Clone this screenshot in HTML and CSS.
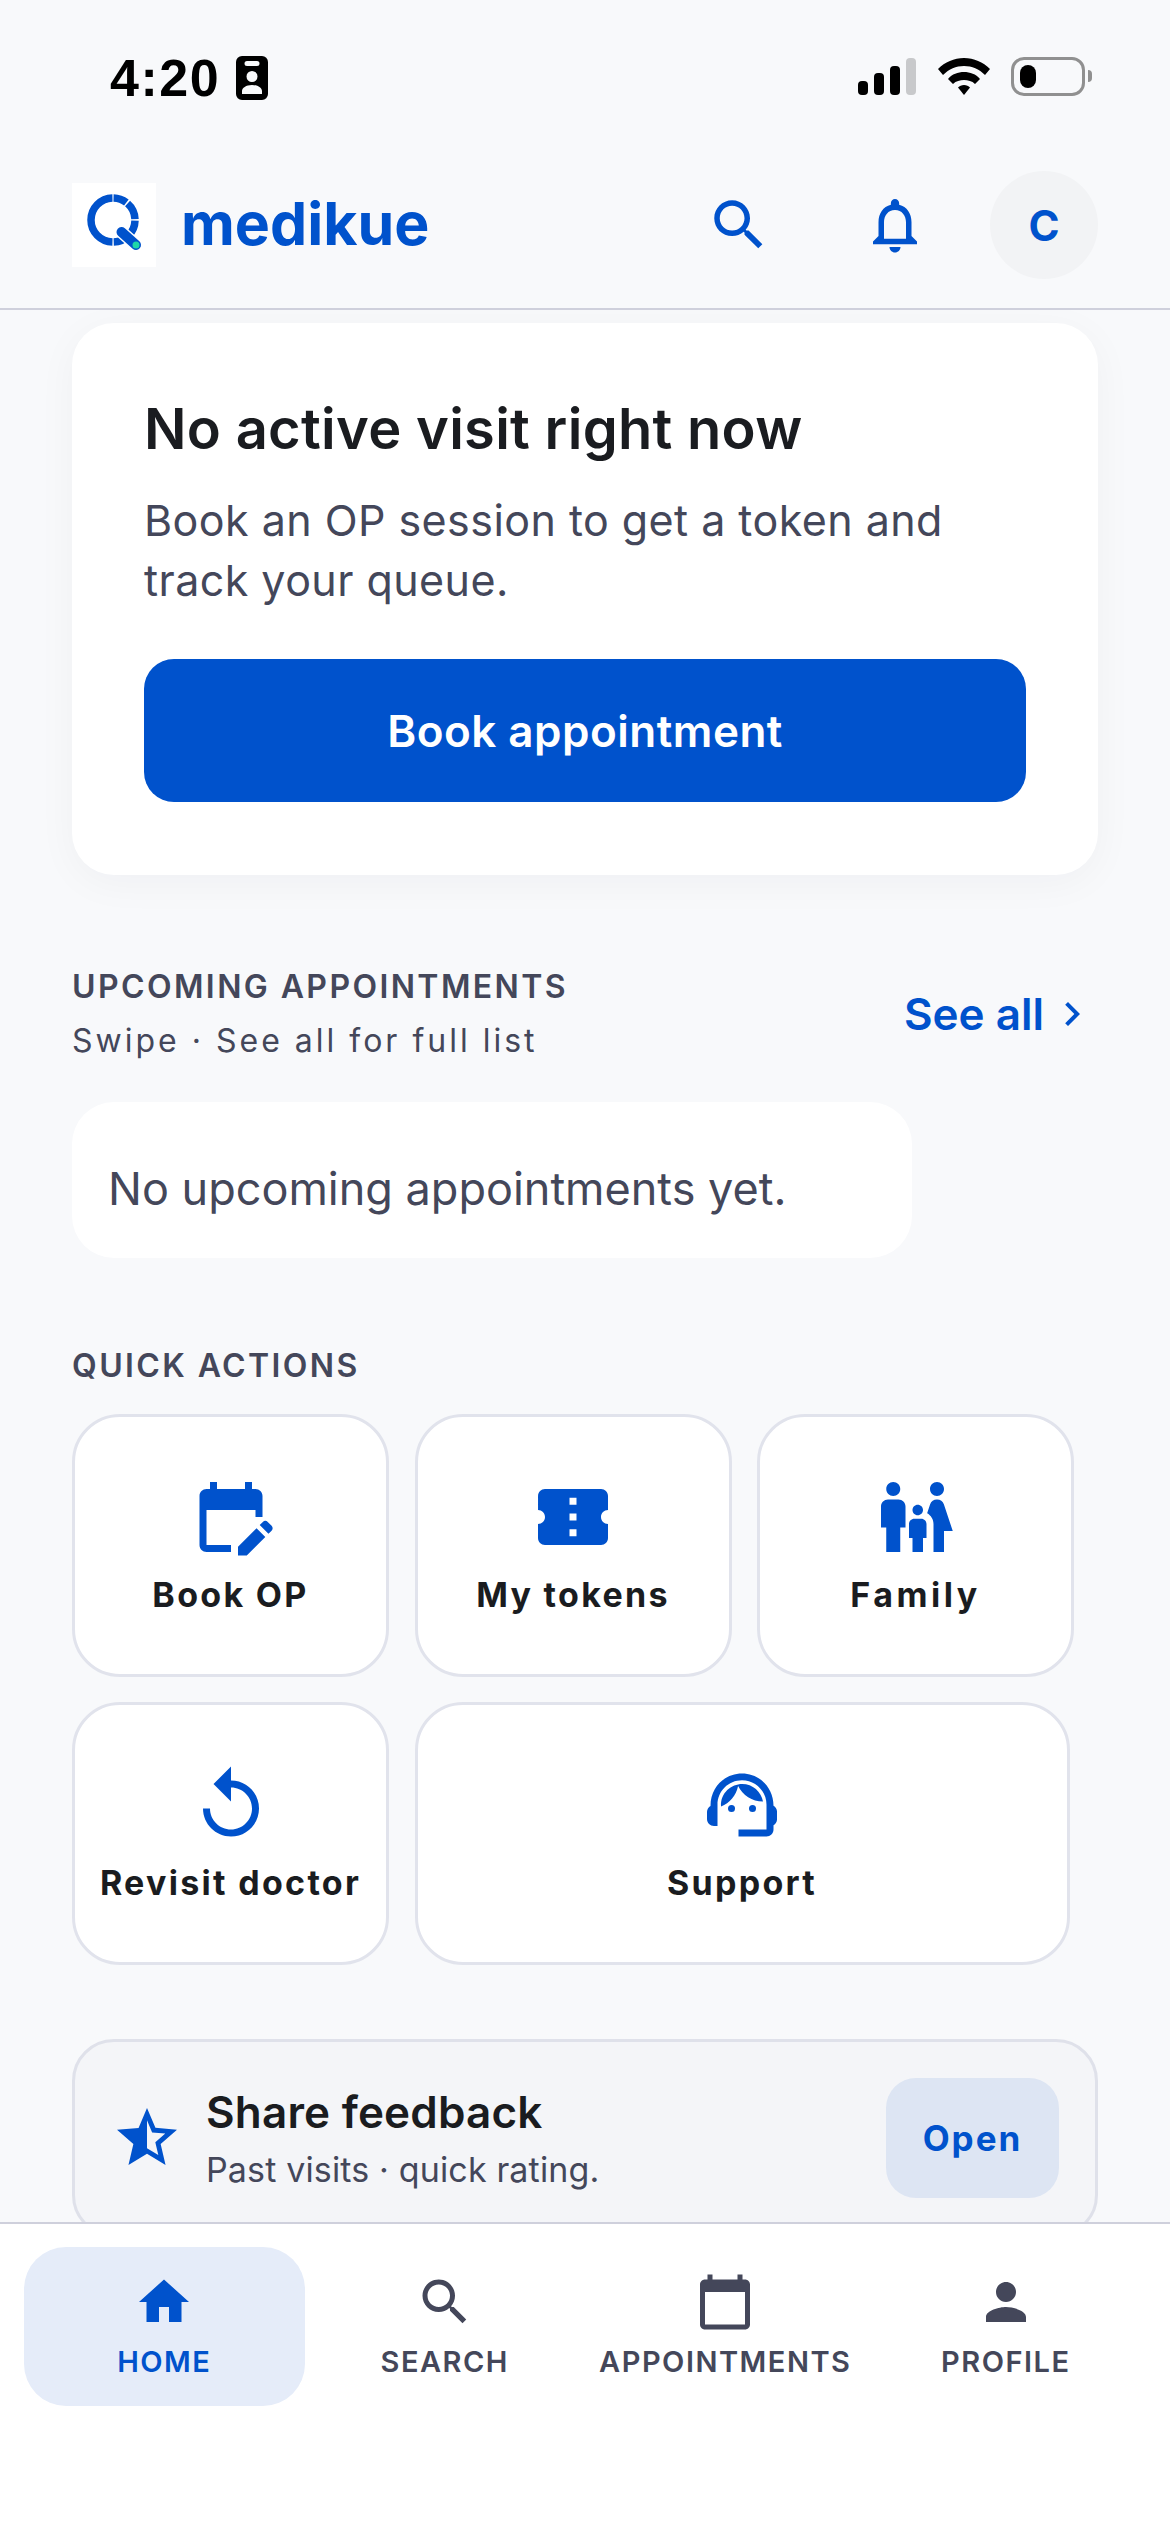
FILE: index.html
```html
<!DOCTYPE html>
<html lang="en">
<head>
<meta charset="utf-8">
<title>medikue</title>
<link rel="stylesheet" href="styles.css">
</head>
<body>
<div class="page">
  <div class="statusbar">
    <div class="status-left">
      <span class="time">4:20</span>
      <svg class="badge" viewBox="0 0 32 44"><path fill="#000" fill-rule="evenodd" d="M6 0h20a6 6 0 0 1 6 6v32a6 6 0 0 1-6 6H6a6 6 0 0 1-6-6V6a6 6 0 0 1 6-6zm5 5a1.500 1.500 0 0 0 0 5h10a1.500 1.500 0 0 0 0-5zm5 10a5.500 5.500 0 1 0 0 11 5.500 5.500 0 0 0 0-11zM6 38h20v-3c0-3-4-6-10-6s-10 3-10 6z"/></svg>
    </div>
    <div class="status-right">
      <svg class="signal" viewBox="0 0 58 37"><rect x="0" y="23" width="10" height="14" rx="4"/><rect x="16" y="15" width="10" height="22" rx="4"/><rect x="32" y="8" width="10" height="29" rx="4"/><rect x="48" y="0" width="10" height="37" rx="4" fill="#c8c9cb"/></svg>
      <svg class="wifi" viewBox="0 0 52 37"><path d="M26 0c10 0 19 4 26 11l-5 6C41 11 34 8 26 8S11 11 5 17l-5-6C7 4 16 0 26 0z"/><path d="M26 14c6 0 12 2 16 7l-5 5c-3-3-7-4-11-4s-8 1-11 4l-5-5c4-5 10-7 16-7z"/><path d="M26 27c2.500 0 4.500 1 6 2.500L26 37l-6-7.500C21.500 28 23.500 27 26 27z"/></svg>
      <div class="battery"><span class="battery-level"></span></div>
      <span class="battery-nub"></span>
    </div>
  </div>

  <header class="topbar">
    <div class="logo-box">
      <svg class="logo" viewBox="0 0 84 84">
        <circle cx="41" cy="37" r="22" fill="none" stroke="#0052cc" stroke-width="7.500" pathLength="360" stroke-dasharray="0 1.500 36 4 46 4 86.500 3.500 177 1.500" transform="rotate(-90 41 37)"/>
        <path d="M49.500 49 L64 62" stroke="#fff" stroke-width="13" stroke-linecap="round"/>
        <path d="M49.500 49 L64 62" stroke="#0052cc" stroke-width="10" stroke-linecap="round"/>
        <circle cx="64" cy="62" r="3.500" fill="#1fd6a8"/>
      </svg>
    </div>
    <span class="brand">medikue</span>
    <div class="top-actions">
      <svg class="top-icon" viewBox="0 0 24 24"><path d="M15.500 14h-.79l-.28-.27C15.410 12.590 16 11.110 16 9.500 16 5.910 13.090 3 9.500 3S3 5.910 3 9.500 5.910 16 9.500 16c1.610 0 3.090-.59 4.230-1.570l.27.28v.79l5 4.990L20.490 19l-4.990-5zm-6 0C7.010 14 5 11.990 5 9.500S7.010 5 9.500 5 14 7.010 14 9.500 11.990 14 9.500 14z"/></svg>
      <svg class="top-icon" viewBox="0 0 24 24"><path d="M12 22c1.100 0 2-.9 2-2h-4c0 1.100.9 2 2 2zm6-6v-5c0-3.070-1.630-5.640-4.500-6.320V4c0-.83-.67-1.500-1.500-1.500s-1.500.67-1.500 1.500v.68C7.640 5.360 6 7.920 6 11v5l-2 2v1h16v-1l-2-2zm-2 1H8v-6c0-2.480 1.510-4.500 4-4.500s4 2.020 4 4.500v6z"/></svg>
      <div class="avatar">C</div>
    </div>
  </header>

  <main class="content">
    <section class="visit-card">
      <h1 class="visit-title">No active visit right now</h1>
      <p class="visit-text">Book an OP session to get a token and track your queue.</p>
      <div class="primary-btn">Book appointment</div>
    </section>

    <section class="section-head">
      <div>
        <div class="eyebrow">UPCOMING APPOINTMENTS</div>
        <div class="hint">Swipe · See all for full list</div>
      </div>
      <div class="see-all">See all
        <svg class="chevron" viewBox="0 0 24 24"><path d="M10 6L8.590 7.410 13.170 12l-4.580 4.590L10 18l6-6z"/></svg>
      </div>
    </section>

    <div class="empty-card">No upcoming appointments yet.</div>

    <div class="eyebrow quick-title">QUICK ACTIONS</div>
    <div class="actions">
      <div class="action">
        <svg class="action-icon" viewBox="0 0 24 24"><path d="M5 10h14v2h2V6c0-1.100-.9-2-2-2h-1V2h-2v2H8V2H6v2H5c-1.100 0-2 .9-2 2v14c0 1.100.9 2 2 2h7v-2H5V10z"/><path d="M14 20.500V23h2.500l5.300-5.300-2.500-2.500zM22.700 16.800l-2.500-2.500.9-.9c.4-.4 1-.4 1.400 0l1.100 1.100c.4.4.4 1 0 1.400z"/></svg>
        <span class="action-label">Book OP</span>
      </div>
      <div class="action">
        <svg class="action-icon" viewBox="0 0 24 24"><path d="M22 10V6c0-1.110-.9-2-2-2H4c-1.100 0-1.990.89-1.990 2v4c1.100 0 1.990.9 1.990 2s-.89 2-2 2v4c0 1.100.9 2 2 2h16c1.100 0 2-.9 2-2v-4c-1.100 0-2-.9-2-2s.9-2 2-2zm-9 7.500h-2v-2h2v2zm0-4.500h-2v-2h2v2zm0-4.500h-2v-2h2v2z"/></svg>
        <span class="action-label">My tokens</span>
      </div>
      <div class="action">
        <svg class="action-icon" viewBox="0 0 24 24"><path d="M16 4c0-1.110.89-2 2-2s2 .89 2 2-.89 2-2 2-2-.89-2-2zm4 18v-6h2.500l-2.540-7.630C19.680 7.550 18.920 7 18.060 7h-.12c-.86 0-1.630.55-1.900 1.370l-.86 2.580C16.260 11.550 17 12.680 17 14v8h3zM12.500 11.500c.83 0 1.500-.67 1.500-1.500s-.67-1.500-1.500-1.500S11 9.170 11 10s.67 1.500 1.500 1.500zM5.500 6c1.110 0 2-.89 2-2s-.89-2-2-2-2 .89-2 2 .89 2 2 2zm2 16v-7H9V9c0-1.100-.9-2-2-2H4c-1.100 0-2 .9-2 2v6h1.500v7h4zm6.500 0v-4h1v-4c0-.82-.68-1.500-1.500-1.500h-2c-.82 0-1.500.68-1.500 1.500v4h1v4h3z"/></svg>
        <span class="action-label action-label-family">Family</span>
      </div>
      <div class="action">
        <svg class="action-icon" viewBox="0 0 24 24"><path d="M12 5V1L7 6l5 5V7c3.310 0 6 2.690 6 6s-2.690 6-6 6-6-2.690-6-6H4c0 4.420 3.580 8 8 8s8-3.580 8-8-3.580-8-8-8z"/></svg>
        <span class="action-label">Revisit doctor</span>
      </div>
      <div class="action action-wide">
        <svg class="action-icon" viewBox="0 0 24 24"><path d="M21 12.220C21 6.730 16.740 3 12 3c-4.690 0-9 3.650-9 9.280-.6.34-1 .98-1 1.720v2c0 1.100.9 2 2 2h1v-6.100c0-3.870 3.130-7 7-7s7 3.130 7 7V19h-8v2h8c1.100 0 2-.9 2-2v-1.220c.59-.31 1-.92 1-1.620v-2.300c0-.7-.41-1.310-1-1.640z"/><circle cx="9" cy="13" r="1"/><circle cx="15" cy="13" r="1"/><path d="M18 11.030C17.520 8.180 15.040 6 12.050 6c-3.030 0-6.290 2.510-6.030 6.450 2.470-1.010 4.330-3.210 4.860-5.890 1.310 2.630 4 4.440 7.120 4.470z"/></svg>
        <span class="action-label">Support</span>
      </div>
    </div>

    <div class="feedback">
      <svg class="star" viewBox="0 0 24 24"><path d="M22 9.240l-7.190-.62L12 2 9.190 8.630 2 9.240l5.460 4.730L5.820 21 12 17.270 18.180 21l-1.630-7.030L22 9.240zM12 15.400V6.100l1.710 4.040 4.380.38-3.320 2.880 1 4.280L12 15.400z"/></svg>
      <div class="feedback-text">
        <div class="feedback-title">Share feedback</div>
        <div class="feedback-sub">Past visits · quick rating.</div>
      </div>
      <div class="open-btn">Open</div>
    </div>
  </main>

  <nav class="tabs">
    <div class="tab tab-active">
      <svg class="tab-icon" viewBox="0 0 24 24"><path d="M10 20v-6h4v6h5v-8h3L12 3 2 12h3v8z"/></svg>
      <span class="tab-label">HOME</span>
    </div>
    <div class="tab">
      <svg class="tab-icon" viewBox="0 0 24 24"><path d="M15.500 14h-.79l-.28-.27C15.410 12.590 16 11.110 16 9.500 16 5.910 13.090 3 9.500 3S3 5.910 3 9.500 5.910 16 9.500 16c1.610 0 3.090-.59 4.230-1.570l.27.28v.79l5 4.990L20.490 19l-4.990-5zm-6 0C7.010 14 5 11.990 5 9.500S7.010 5 9.500 5 14 7.010 14 9.500 11.990 14 9.500 14z"/></svg>
      <span class="tab-label">SEARCH</span>
    </div>
    <div class="tab">
      <svg class="tab-icon" viewBox="0 0 24 24"><path d="M20 3h-1V1h-2v2H7V1H5v2H4c-1.100 0-2 .9-2 2v16c0 1.100.9 2 2 2h16c1.100 0 2-.9 2-2V5c0-1.100-.9-2-2-2zm0 18H4V8h16v13z"/></svg>
      <span class="tab-label">APPOINTMENTS</span>
    </div>
    <div class="tab">
      <svg class="tab-icon" viewBox="0 0 24 24"><path d="M12 12c2.210 0 4-1.790 4-4s-1.790-4-4-4-4 1.790-4 4 1.790 4 4 4zm0 2c-2.670 0-8 1.340-8 4v2h16v-2c0-2.660-5.330-4-8-4z"/></svg>
      <span class="tab-label">PROFILE</span>
    </div>
  </nav>
</div>
</body>
</html>
```
FILE: styles.css
```css
* { box-sizing: border-box; }
html, body { margin: 0; padding: 0; }
body { font-family: Inter, "Noto Sans", sans-serif; color: #1a1c20; background: #f8f9fb; }
.page { width: 1170px; height: 2532px; display: flex; flex-direction: column; overflow: hidden; background: #f8f9fb; }

.statusbar { height: 160px; flex: none; display: flex; justify-content: space-between; padding: 56px 78px 0 110px; align-items: flex-start; }
.status-left { display: flex; align-items: center; gap: 16px; }
.time { font-family: "Liberation Sans", sans-serif; font-weight: 700; font-size: 52px; line-height: 44px; letter-spacing: 1.500px; color: #000; }
.badge { width: 32px; height: 44px; display: block; }
.status-right { display: flex; align-items: center; height: 40px; }
.signal { width: 58px; height: 37px; margin-right: 22px; }
.wifi { width: 52px; height: 37px; margin-right: 21px; }
.battery { width: 74px; height: 39px; border: 3px solid #909090; border-radius: 13px; padding: 5px 6px; }
.battery-level { display: block; width: 16px; height: 100%; background: #000; border-radius: 8px; }
.battery-nub { width: 4px; height: 12px; background: #909090; border-radius: 0 4px 4px 0; margin-left: 3px; }

.topbar { height: 150px; flex: none; display: flex; align-items: flex-start; padding: 11px 72px 0; border-bottom: 2px solid #cfd0dc; }
.logo-box { width: 84px; height: 84px; margin-top: 12px; background: #fff; flex: none; }
.logo { display: block; width: 84px; height: 84px; }
.brand { margin-left: 25px; margin-top: 17px; font-weight: 700; font-size: 59px; line-height: 72px; color: #0052cc; }
.top-actions { margin-left: auto; display: flex; align-items: center; height: 108px; }
.top-icon { width: 66px; height: 66px; fill: #0052cc; margin-right: 90px; }
.top-actions .top-icon:nth-child(2) { margin-right: 62px; }
.avatar { width: 108px; height: 108px; border-radius: 50%; background: #f2f3f5; color: #0052cc; font-weight: 700; font-size: 42px; display: flex; align-items: center; justify-content: center; }

.content { flex: 1; min-height: 0; overflow: hidden; padding: 13px 72px 0; }
.visit-card { background: #fff; border-radius: 42px; padding: 70px 72px 0; height: 552px; box-shadow: 0 8px 40px rgba(20, 30, 60, .04); }
.visit-title { margin: 0; font-weight: 600; font-size: 56px; line-height: 72px; letter-spacing: .3px; color: #1a1c20; }
.visit-text { margin: 25px 0 0; max-width: 830px; font-size: 43px; line-height: 60px; letter-spacing: .45px; color: #44475a; }
.primary-btn { margin-top: 49px; height: 143px; background: #0052cc; color: #fff; border-radius: 30px; font-weight: 600; font-size: 44px; letter-spacing: .5px; display: flex; align-items: center; justify-content: center; }

.section-head { display: flex; justify-content: space-between; align-items: center; margin-top: 90px; padding-right: 2px; }
.eyebrow { font-weight: 600; font-size: 32px; line-height: 44px; letter-spacing: 2.400px; color: #44475a; }
.hint { margin-top: 10px; font-size: 32px; line-height: 44px; letter-spacing: 3px; color: #44475a; }
.see-all { display: flex; align-items: center; gap: 4px; font-weight: 600; font-size: 44px; color: #0052cc; }
.chevron { width: 48px; height: 48px; fill: #0052cc; }

.empty-card { margin-top: 39px; width: 840px; height: 156px; background: #fff; border-radius: 42px; padding: 16px 36px 0; display: flex; align-items: center; font-size: 45px; color: #44475a; }
.quick-title { margin-top: 86px; }
.actions { margin-top: 26px; display: flex; flex-wrap: wrap; gap: 25px 25.500px; width: 1002px; }
.action { width: 317px; height: 263px; background: #fff; border: 3px solid #e1e3ec; border-radius: 48px; display: flex; flex-direction: column; align-items: center; padding-top: 58px; }
.action-wide { width: 655px; }
.action-icon { width: 84px; height: 84px; fill: #0052cc; flex: none; }
.action-label { margin-top: 14px; font-weight: 700; font-size: 34px; line-height: 44px; letter-spacing: 2.300px; color: #1a1c20; }
.action-label-family { letter-spacing: 3.500px; }

.feedback { margin-top: 74px; width: 1026px; height: 198px; background: #f4f5f8; border: 3px solid #dfe1ea; border-radius: 42px; display: flex; align-items: center; padding: 0 36px; }
.star { width: 72px; height: 72px; fill: #0052cc; flex: none; }
.feedback-text { margin-left: 23px; flex: 1; }
.feedback-title { font-weight: 600; font-size: 44px; line-height: 60px; letter-spacing: .2px; color: #1a1c20; }
.feedback-sub { margin-top: 3px; font-size: 34px; line-height: 50px; letter-spacing: .15px; color: #44475a; }
.open-btn { width: 173px; height: 120px; border-radius: 30px; background: #dde5f3; color: #0052cc; font-weight: 700; font-size: 35px; letter-spacing: 2px; display: flex; align-items: center; justify-content: center; }

.tabs { height: 310px; flex: none; background: #fff; border-top: 2px solid #cfd0dc; padding: 23px 24px 0; display: flex; align-items: flex-start; }
.tab { flex: 1 1 0; height: 159px; border-radius: 42px; display: flex; flex-direction: column; align-items: center; padding-top: 25px; color: #44475a; }
.tab-active { background: #e5ecf9; color: #0052cc; }
.tab-icon { width: 60px; height: 60px; fill: currentColor; }
.tab-label { margin-top: 10px; font-weight: 600; font-size: 29px; line-height: 40px; letter-spacing: 1.500px; }
```
